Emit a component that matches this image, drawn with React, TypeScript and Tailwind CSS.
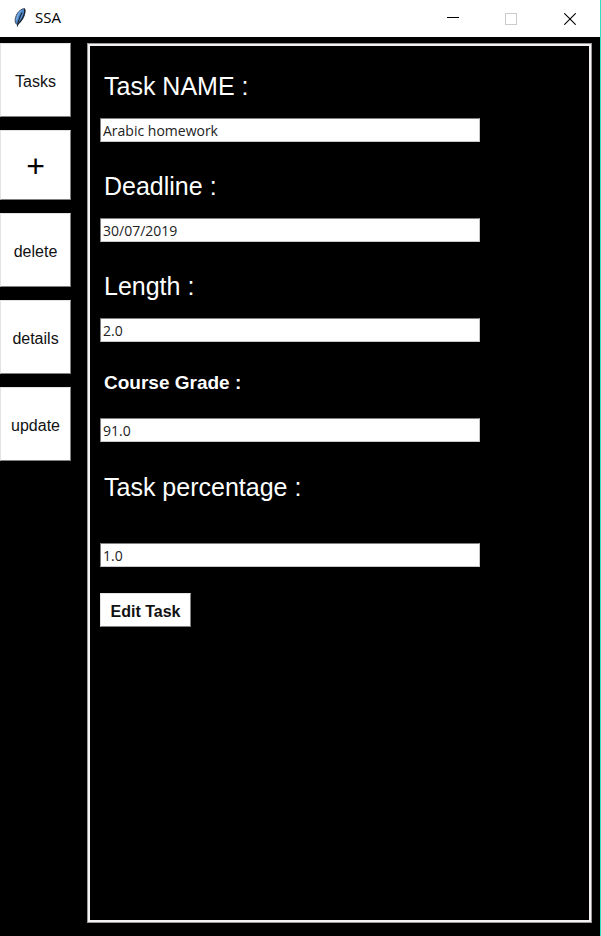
import React from "react";

const actions = [
  { label: "Tasks", look: "h-[74px] pt-1 text-base" },
  { label: "+", look: "h-[70px] pt-0.5 text-[32px] leading-8 text-black" },
  { label: "delete", look: "h-[74px] pt-1 text-base" },
  { label: "details", look: "h-[74px] pt-1 text-base" },
  { label: "update", look: "h-[74px] pt-1 text-base" },
];

const regular = "text-[25px]";
const bold = "text-[19px] font-bold";

const fields = [
  { id: "name", label: "Task NAME :", value: "Arabic homework", look: regular, block: "h-[100px]", labelBox: "h-[62px]" },
  { id: "deadline", label: "Deadline :", value: "30/07/2019", look: regular, block: "h-[100px]", labelBox: "h-[62px]" },
  { id: "length", label: "Length :", value: "2.0", look: regular, block: "h-[100px]", labelBox: "h-[62px]" },
  { id: "grade", label: "Course Grade :", value: "91.0", look: bold, block: "h-[100px]", labelBox: "h-[62px] pb-2" },
  { id: "percentage", label: "Task percentage :", value: "1.0", look: regular, block: "h-[125px]", labelBox: "h-[87px] pb-6" },
];

function Feather() {
  return (
    <svg width="14" height="22" viewBox="0 0 14 22" aria-hidden="true">
      <path d="M11.500 2.500C8.500 2.700 5 5.500 3.400 9.200c-1.300 3-1.600 5.500-.8 8l1.600 1.300c2.800-1.600 5-4.200 6.600-7.900C12 7.500 12.500 5 11.500 2.500z" fill="#4f8ad0" stroke="#4a5360" strokeWidth="1" />
      <path d="M8 4.500C5.500 7 4 10.500 3.600 14" fill="none" stroke="#8dbbe8" strokeWidth="1" />
      <path d="M11.500 3C12.200 6 11 9.500 9.300 12.500S6 17 4.500 18.500" fill="none" stroke="#18222e" strokeWidth="1.300" />
      <path d="M9 6.500C6.800 11 5 15 4.300 20.500" fill="none" stroke="#1d2a3a" strokeWidth="1.100" />
    </svg>
  );
}

function TitleBar() {
  return (
    <header className="flex h-[37px] items-center bg-white pl-[13px] text-black">
      <div className="flex flex-1 items-center gap-2 pb-1">
        <Feather />
        <h1 className="font-['Open_Sans','Noto_Sans',sans-serif] text-[15px] leading-5">SSA</h1>
      </div>
      <button type="button" aria-label="Minimize" className="flex h-full w-[58px] items-center justify-center">
        <svg width="12" height="12" viewBox="0 0 12 12" shapeRendering="crispEdges">
          <path d="M0 4.500h12" stroke="#000" />
        </svg>
      </button>
      <button type="button" aria-label="Maximize" disabled className="flex h-full w-[58px] items-center justify-center">
        <svg width="12" height="12" viewBox="0 0 12 12" shapeRendering="crispEdges">
          <rect x="0.5" y="0.5" width="11" height="11" fill="none" stroke="#ccc" />
        </svg>
      </button>
      <button type="button" aria-label="Close" className="flex h-full w-[60px] items-center justify-center">
        <svg width="12" height="12" viewBox="0 0 12 12">
          <path d="M0.300 0.300L11.700 11.700M11.700 0.300L0.300 11.700" stroke="#000" strokeWidth="1.100" />
        </svg>
      </button>
    </header>
  );
}

export default function App() {
  return (
    <div className="flex min-h-screen flex-col border-r border-[#2ee0c0] bg-black font-['Liberation_Sans',Arial,sans-serif]">
      <TitleBar />
      <div className="flex flex-1 gap-4 pt-[6px] pr-2 pb-[13px]">
        <nav className="flex w-[71px] shrink-0 flex-col gap-[13px]">
          {actions.map((a) => (
            <button
              key={a.label}
              type="button"
              className={`${a.look} border border-t-[#e3e3e3] border-r-[#808080] border-b-[#808080] border-l-[#e3e3e3] bg-white text-[#111]`}
            >
              {a.label}
            </button>
          ))}
        </nav>
        <main className="min-w-0 flex-1 border border-[#9a9898]">
          <form onSubmit={(e) => e.preventDefault()} className="h-full border-2 border-[#f4f2f2] px-[10px] pt-[10px]">
            {fields.map((f) => (
              <div key={f.id} className={f.block}>
                <label htmlFor={f.id} className={`${f.labelBox} ${f.look} flex items-center pl-1 text-white`}>
                  {f.label}
                </label>
                <input
                  id={f.id}
                  type="text"
                  defaultValue={f.value}
                  className="block h-6 w-full max-w-[380px] border border-t-[#808080] border-r-[#c8c8c8] border-b-[#c8c8c8] border-l-[#808080] bg-white px-0.5 font-['Open_Sans','Noto_Sans',sans-serif] text-[14px] leading-5 text-[#222] outline-none"
                />
              </div>
            ))}
            <button
              type="submit"
              className="mt-3 h-[34px] w-[91px] border border-t-[#e3e3e3] border-r-[#808080] border-b-[#808080] border-l-[#e3e3e3] bg-white pt-1 text-base font-bold text-[#111]"
            >
              Edit Task
            </button>
          </form>
        </main>
      </div>
    </div>
  );
}
